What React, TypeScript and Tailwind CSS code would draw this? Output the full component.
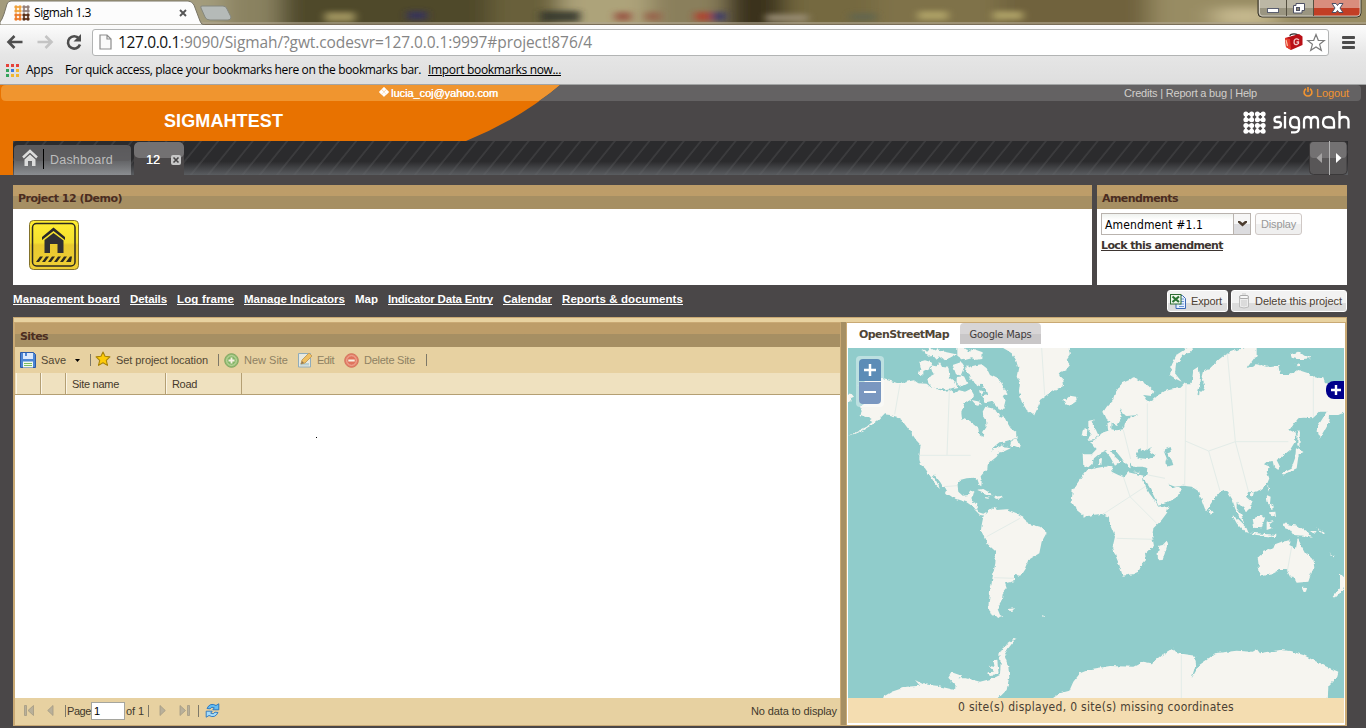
import { useLayoutEffect, useRef, useState, type ReactNode } from "react";

/** Single line of text whose letter spacing is computed so that it fills `w` pixels. */
function T({ w, className = "", children }: { w: number; className?: string; children: string }) {
  const ref = useRef<HTMLSpanElement>(null);
  const [ls, setLs] = useState(0);
  useLayoutEffect(() => {
    const el = ref.current;
    if (el) setLs((w - el.getBoundingClientRect().width) / children.length);
  }, [w, children]);
  return (
    <span ref={ref} className={`inline-block shrink-0 whitespace-nowrap ${className}`} style={{ letterSpacing: ls }}>
      {children}
    </span>
  );
}

const DOTS = [0, 1, 2, 3];

function DotGrid({ size, r, colors }: { size: number; r: number; colors: string[] }) {
  const s = size / 4;
  return (
    <svg width={size} height={size} viewBox={`0 0 ${size} ${size}`} className="shrink-0">
      {DOTS.map((y) =>
        DOTS.map((x) => (
          <circle key={`${x}-${y}`} cx={s * (x + 0.5)} cy={s * (y + 0.5)} r={r} fill={colors[(y > 1 ? 2 : 0) + (x > 1 ? 1 : 0)]} />
        )),
      )}
      {[0, 2].map((y) =>
        [0, 2].map((x) => (
          <path
            key={`b${x}-${y}`}
            d={`M${s * (x + 0.5)} ${s * (y + 0.5)}h${s}v${s}h${-s}z`}
            fill="none"
            stroke={colors[(y > 1 ? 2 : 0) + (x > 1 ? 1 : 0)]}
            strokeWidth={r * 0.8}
          />
        )),
      )}
    </svg>
  );
}

function TitleBar() {
  return (
    <div className="relative flex h-[25px] items-start overflow-hidden bg-[#7d7048]">
      <svg className="absolute inset-0" width="1366" height="25">
        <defs>
          <filter id="soft" x="-20%" y="-50%" width="140%" height="200%">
            <feGaussianBlur stdDeviation="12 4" />
          </filter>
          <filter id="soft2" x="-50%" y="-50%" width="200%" height="200%">
            <feGaussianBlur stdDeviation="4 2.500" />
          </filter>
        </defs>
        <g filter="url(#soft)">
          <rect x="-40" y="-10" width="280" height="45" fill="#a39b7c" />
          <rect x="225" y="-10" width="75" height="45" fill="#8a8260" />
          <rect x="280" y="-10" width="280" height="45" fill="#504a2b" />
          <rect x="490" y="-10" width="70" height="45" fill="#69603a" />
          <rect x="560" y="-10" width="90" height="45" fill="#ada37a" />
          <rect x="650" y="-10" width="80" height="45" fill="#8a7f5c" />
          <rect x="725" y="-10" width="60" height="45" fill="#3a331f" />
          <rect x="785" y="-10" width="90" height="45" fill="#75693f" />
          <rect x="875" y="-10" width="130" height="45" fill="#7f7249" />
          <rect x="1000" y="-10" width="150" height="45" fill="#6f623c" />
          <rect x="1150" y="-10" width="260" height="45" fill="#988c64" />
          <rect x="1215" y="8" width="60" height="17" fill="#c4b78d" />
        </g>
        <g filter="url(#soft2)" opacity=".85">
          <rect x="325" y="12" width="30" height="10" fill="#a99c65" />
          <rect x="407" y="11" width="20" height="9" fill="#34315e" />
          <rect x="540" y="11" width="40" height="11" fill="#33352b" />
          <rect x="615" y="12" width="16" height="9" fill="#96503f" />
          <rect x="645" y="12" width="16" height="9" fill="#97604a" />
          <rect x="695" y="12" width="16" height="9" fill="#b33d2b" />
          <rect x="712" y="12" width="14" height="9" fill="#39376c" />
          <rect x="766" y="14" width="42" height="8" fill="#9b8f77" />
          <rect x="850" y="13" width="26" height="8" fill="#626650" />
          <rect x="918" y="11" width="30" height="9" fill="#b4a76b" />
          <rect x="993" y="11" width="30" height="9" fill="#b4a76b" />
        </g>
        <rect y="22" width="1366" height="2" fill="#b0a791" opacity=".6" />
        <rect y="24" width="1366" height="1" fill="#7a6e58" />
        <path d="M202 6H223Q226 6 227 9L231 17Q231 20 228 20H210Q206 20 205 17L201 8Q200 6 202 6Z" fill="#b5bab8" stroke="#85877e" />
        <path d="M0 25V22Q2 20 4 14L7 4Q8 1 11 1H188Q192 1 194 5L200 21Q201 25 205 25Z" fill="#fcfcfc" stroke="#787465" />
        <path d="M1258 -2V13Q1258 17 1262 17H1357Q1361 17 1361 13V-2Z" fill="#9a9581" stroke="#363229" />
        <path d="M1314 0H1360V13Q1360 16 1357 16H1314Z" fill="#c23e25" />
        <path d="M1314 0H1360V8H1314Z" fill="#d98d7d" />
        <path d="M1259 0H1313V8H1259Z" fill="#bcb7a5" />
        <path d="M1259.500 0V13Q1260 16 1262 16H1357Q1360 16 1360 13V0" fill="none" stroke="#ded9cf" strokeOpacity=".8" />
        <path d="M1286.500 0V16M1313.500 0V16" stroke="#555041" />
        <rect x="1267.500" y="8.500" width="11" height="4" fill="#fff" stroke="#5b5f70" />
        <path d="M1296 3.500H1304.500V10.500H1302V13H1293.500V5.500H1296Z" fill="#fff" stroke="#4f5265" />
        <rect x="1296.500" y="7.500" width="3" height="3" fill="#898673" stroke="#4f5265" />
        <path d="M1332 3.500H1336L1337.500 5.500L1339 3.500H1343L1340 8L1343 12.500H1339L1337.500 10.500L1336 12.500H1332L1335 8Z" fill="#fff" stroke="#4b4f66" />
      </svg>
      <div className="relative flex items-center pl-[14px] pt-[5px]">
        <DotGrid size={16} r={1.7} colors={["#f0a23c", "#94807a", "#ec7a28", "#5b3018"]} />
        <T w={57} className="ml-1 font-['Open_Sans'] text-[12px] leading-4 text-black">
          Sigmah 1.3
        </T>
        <svg className="ml-[88px]" width="8" height="8" viewBox="0 0 8 8">
          <path d="M1 1L7 7M7 1L1 7" stroke="#555" strokeWidth="1.900" />
        </svg>
      </div>
    </div>
  );
}

const APP_COLORS = ["#e6423a", "#e6423a", "#e6423a", "#35a35c", "#3a7be0", "#f0b72f", "#35a35c", "#f0b72f", "#f0b72f"];

function BrowserBars() {
  return (
    <div className="h-[60px] border-b border-[#a3a5a5] bg-linear-to-b from-[#fcfcfc] via-[#e6e6e6] to-[#dedede]">
      <div className="flex h-[33px] items-center pt-[1px] pl-[6px]">
        <svg width="18" height="18" viewBox="0 0 18 18">
          <path d="M8.500 3L2.500 9L8.500 15M3 9H16.500" fill="none" stroke="#4e4e4e" strokeWidth="2.600" />
        </svg>
        <svg className="ml-3" width="18" height="18" viewBox="0 0 18 18">
          <path d="M9.500 3L15.500 9L9.500 15M15 9H1.500" fill="none" stroke="#c4c4c4" strokeWidth="2.600" />
        </svg>
        <svg className="ml-[11px]" width="18" height="18" viewBox="0 0 18 18">
          <path d="M14 5.500A6.200 6.200 0 1 0 15 11.500" fill="none" stroke="#4e4e4e" strokeWidth="2.600" />
          <path d="M16 1V8.500H8.500Z" fill="#4e4e4e" />
        </svg>
        <div className="ml-[9px] flex h-[27px] w-[1237px] items-center rounded-[3px] border border-[#b2b4b4] bg-white pl-[6px]">
          <svg width="13" height="16" viewBox="0 0 13 16">
            <path d="M1 1H8L12 5V15H1Z M8 1V5H12" fill="#fafafa" stroke="#8d8d8d" strokeWidth="1.200" />
          </svg>
          <T w={62} className="ml-[6px] font-['Open_Sans'] text-[15.500px] leading-5 text-[#111]">
            127.0.0.1
          </T>
          <T w={412} className="font-['Open_Sans'] text-[15.500px] leading-5 text-[#858585]">
            :9090/Sigmah/?gwt.codesvr=127.0.0.1:9997#project!876/4
          </T>
          <svg className="ml-auto" width="20" height="18" viewBox="0 0 20 18">
            <path d="M6 3Q6 .8 10 .8Q14 .8 14 3" fill="none" stroke="#333" strokeWidth="1.300" />
            <path d="M1 5L15 1L18.500 3.500V12L7 17L2 14Z" fill="#b90f16" />
            <path d="M1 5L6 6L7 17L2 14Z" fill="#e43c2d" />
            <path d="M2 7L3.500 13" stroke="#ffc4a8" strokeWidth="1.200" />
            <path d="M15 7Q12 4.500 10.300 7.300Q9.300 12.500 13 11.500L14.500 10.500V9H12.500" fill="none" stroke="#f3c9c9" strokeWidth="1.300" />
          </svg>
          <svg className="mr-[2px] ml-[2px]" width="20" height="19" viewBox="0 0 20 19">
            <path d="M10 1.500L12.300 7.300L18.300 7.500L13.600 11.300L15.300 17.300L10 13.900L4.700 17.300L6.400 11.300L1.700 7.500L7.700 7.300Z" fill="#fff" stroke="#7c7c7c" strokeWidth="1.200" />
          </svg>
        </div>
        <svg className="ml-[13px]" width="13" height="13" viewBox="0 0 13 13">
          <path d="M1 1.500H12M1 6.500H12M1 11.500H12" stroke="#4b4b4b" strokeWidth="2.800" strokeLinecap="round" />
        </svg>
      </div>
      <div className="flex h-[24px] items-center pl-[6px] font-['Open_Sans'] text-[12px] leading-4 text-black">
        <div className="grid grid-cols-3 gap-[2px]">
          {APP_COLORS.map((c, i) => (
            <span key={i} className="size-[3px]" style={{ background: c }} />
          ))}
        </div>
        <T w={27} className="ml-[7px]">Apps</T>
        <T w={356} className="ml-[12px]">For quick access, place your bookmarks here on the bookmarks bar.</T>
        <T w={133} className="ml-[7px] underline">Import bookmarks now...</T>
      </div>
    </div>
  );
}

function AppHeader() {
  return (
    <div className="relative h-[90px] bg-[#4a4748] font-['Liberation_Sans']">
      <svg className="absolute inset-0" width="1366" height="90">
        <path d="M0 0H560Q520 34 466 56H13V90H0Z" fill="#e87200" />
        <path d="M6 0H560Q551 8 539 16H6Q1 16 1 11V5Q1 0 6 0Z" fill="#f0952f" />
        <path d="M560 0H1357Q1361 0 1361 4V12Q1361 16 1357 16H539Q551 8 560 0Z" fill="#646263" />
      </svg>
      <div className="relative flex h-4 items-center pl-[379px] text-[11px] leading-4 text-[#d2cfcb]">
        <svg width="10" height="10" viewBox="0 0 10 10" className="-mt-[2px]">
          <path d="M5 0L7.300 2.300L5 4.600L2.700 2.300ZM2.400 2.500L4.800 5L2.400 7.500L0 5ZM7.600 2.500L10 5L7.600 7.500L5.200 5ZM5 5.200L7.300 7.500L5 9.800L2.700 7.500Z" fill="#fff" stroke="#fff" strokeWidth=".3" />
        </svg>
        <T w={107} className="ml-[2px] text-white [text-shadow:0.3px_0_0_#fff]">lucia_coj@yahoo.com</T>
        <T w={133} className="ml-[626px]">Credits | Report a bug | Help</T>
        <svg className="ml-[46px] -mt-[2px]" width="10" height="10" viewBox="0 0 10 10">
          <path d="M3 1.800A3.900 3.900 0 1 0 7 1.800M5 0V5" fill="none" stroke="#f29430" strokeWidth="1.600" />
        </svg>
        <T w={33} className="ml-[3px] text-[#f29430]">Logout</T>
      </div>
      <div className="relative flex h-10 items-center pl-[164px]">
        <T w={119} className="text-[18px] leading-5 font-bold text-white">SIGMAHTEST</T>
        <div className="mt-[10px] ml-[960px] flex items-start self-start">
          <DotGrid size={23} r={2.5} colors={["#fff", "#fff", "#fff", "#fff"]} />
          <svg className="ml-[7px]" width="78" height="24" viewBox="0 0 78 24" fill="none" stroke="#fff" strokeWidth="2.300">
            <path d="M7.500 6H4Q1.500 6 1.500 8.300Q1.500 11 4 11H5.500Q8 11 8 13.600Q8 16.500 5 16.500H.5" />
            <path d="M12 5V17.500M12 1V3.200" />
            <path d="M26 16.500H21.500Q17 16.500 17 11.300Q17 6 21.500 6Q26 6 26 11V17Q26 21.300 22 21.300H18" />
            <path d="M31 17.500V10Q31 6 34.500 6Q38 6 38 10V17.500M38 10Q38 6 41.500 6Q45 6 45 10V17.500" />
            <path d="M61 17.500V11Q61 6 55.500 6Q50 6 50 11.300Q50 16.500 55 16.500H61" />
            <path d="M66.500 0V17.500M66.500 10Q66.500 6 71 6Q75.500 6 75.500 10.500V17.500" />
          </svg>
        </div>
      </div>
      <div className="relative ml-[13px] flex h-[34px] w-[1335px] items-end rounded-tl-[4px] bg-[#2b2b2d] bg-[linear-gradient(to_bottom,transparent_60%,rgba(102,105,109,0.8)_100%),repeating-linear-gradient(129deg,transparent_0px,transparent_10.7px,#3b3b3d_11.7px,#3b3b3d_12.7px,transparent_13.4px)]">
        <div className="relative mr-[3px] ml-[1px] flex h-[30px] w-[117px] items-center overflow-hidden rounded-t-[4px] bg-linear-to-b from-[#3b3b3d] to-[#8b8d90] pl-2">
          <div className="absolute inset-x-0 top-0 h-4 rounded-[4px] bg-[#5e5d5f]/90" />
          <svg className="relative -mt-1" width="16" height="18" viewBox="0 0 16 18">
            <path d="M1 8.500L8 2L15 8.500" fill="none" stroke="#dcdcdc" strokeWidth="2.400" />
            <path d="M2.500 10.500L8 5.500L13.500 10.500V17H10V12H6V17H2.500Z" fill="#dcdcdc" />
          </svg>
          <span className="relative -mt-[2px] ml-[5px] h-5 w-px bg-black" />
          <T w={63} className="relative ml-[6px] text-[12.500px] leading-4 text-[#bdbdbd]">Dashboard</T>
        </div>
        <div className="relative flex h-[33px] w-[50px] items-center overflow-hidden rounded-t-[5px] bg-[#4a4748] pt-[2px] pl-3">
          <div className="absolute inset-x-0 top-0 h-4 rounded-[5px] bg-[#737172]" />
          <span className="relative text-[12.500px] leading-4 text-white [text-shadow:0.3px_0_0_#fff]">12</span>
          <svg className="relative ml-[11px]" width="10" height="10" viewBox="0 0 10 10">
            <rect width="10" height="10" rx="2" fill="#c7c7c7" />
            <path d="M2.500 2.500L7.500 7.500M7.500 2.500L2.500 7.500" stroke="#474546" strokeWidth="1.600" />
          </svg>
        </div>
        <svg className="ml-auto" width="40" height="34" viewBox="0 0 40 34">
          <rect x="1.500" y=".5" width="37.500" height="33" rx="4" fill="#585657" stroke="#3b393a" />
          <path d="M5.500 1H20V17H5.500Q2 17 2 13V5Q2 1 5.500 1ZM20 1H35Q38.500 1 38.500 5V13Q38.500 17 35 17H20Z" fill="#737172" />
          <path d="M21.500 0V34" stroke="#b5b5b5" />
          <path d="M14 12V22L8.500 17Z" fill="#a4a2a2" />
          <path d="M28 12V22L33.500 17Z" fill="#fff" />
        </svg>
      </div>
    </div>
  );
}

function PanelTitle({ w, children, className = "" }: { w: number; children: string; className?: string }) {
  return (
    <div className={`flex h-6 items-center bg-linear-to-b from-[#bd9d69] from-46% to-[#a68f63] to-46% pl-[5px] pt-[3px] ${className}`}>
      <T w={w} className="font-['DejaVu_Sans'] text-[11px] leading-4 font-bold text-[#4b2c20]">
        {children}
      </T>
    </div>
  );
}

function ProjectPanels() {
  return (
    <div className="mx-[13px] mt-[10px] flex h-[100px] w-[1334px] gap-[5px]">
      <section className="w-[1079px] bg-white">
        <PanelTitle w={104}>Project 12 (Demo)</PanelTitle>
        <svg className="mt-[10px] ml-[15px]" width="52" height="52" viewBox="0 0 52 52">
          <defs>
            <linearGradient id="sign" x2="0" y2="1">
              <stop offset="0" stopColor="#ffee32" />
              <stop offset=".45" stopColor="#f5df30" />
              <stop offset=".5" stopColor="#e9c92f" />
              <stop offset="1" stopColor="#efcf35" />
            </linearGradient>
          </defs>
          <rect x="1.500" y="1.500" width="49" height="49" rx="4" fill="url(#sign)" stroke="#83722b" />
          <rect x="4.500" y="4.500" width="42.500" height="42.500" rx="4" fill="none" stroke="#2c2a20" strokeWidth="1.500" />
          <path d="M14 18L25.500 8.500L37 18V21L25.500 12L14 21Z" fill="#29282a" />
          <path d="M16.500 21L25.500 14L35.500 21.500V34H29.500V25H22V34H16.500Z" fill="#303033" />
          <path d="M8 43L12 37.500H15L11 43ZM14 43L18 37.500H21L17 43ZM20 43L24 37.500H27L23 43ZM26 43L30 37.500H33L29 43ZM32 43L36 37.500H39L35 43ZM38 43L42 37.500H44L43 43Z" fill="#2c2a20" />
        </svg>
      </section>
      <section className="w-[250px] bg-white">
        <PanelTitle w={76}>Amendments</PanelTitle>
        <div className="mt-1 ml-1 flex h-[22px] gap-1">
          <div className="flex w-[150px] border border-[#b9b3ae] bg-linear-to-b from-[#eff2ef] to-white to-30%">
            <div className="flex flex-1 items-center pl-[3px]">
              <T w={98} className="mt-[2px] font-['DejaVu_Sans_Condensed','DejaVu_Sans'] text-[12px] leading-4 text-black">Amendment #1.1</T>
            </div>
            <div className="flex w-[17px] items-center justify-center border-l border-[#b9b3ae] bg-linear-to-b from-[#f6f6f6] from-50% to-[#dcdcdf] to-50%">
              <svg width="9" height="6" viewBox="0 0 9 6">
                <path d="M0 0H2L4.500 2L7 0H9V1.500L4.500 5.500L0 1.500Z" fill="#4b3b2e" />
              </svg>
            </div>
          </div>
          <div className="flex w-[47px] items-center justify-center rounded-[3px] border border-[#cfc8c5] bg-linear-to-b from-[#fbfbfb] from-50% to-[#efefef] to-50%">
            <T w={35} className="font-['Liberation_Sans'] text-[11px] leading-4 text-[#989898]">Display</T>
          </div>
        </div>
        <div className="mt-px ml-1 flex h-[19px] items-center">
          <T w={122} className="font-['DejaVu_Sans'] text-[11px] leading-4 font-bold text-[#3d3531] underline underline-offset-1">
            Lock this amendment
          </T>
        </div>
      </section>
    </div>
  );
}

const LINKS: [string, number][] = [
  ["Management board", 107],
  ["Details", 37],
  ["Log frame", 57],
  ["Manage Indicators", 101],
  ["Map", 23],
  ["Indicator Data Entry", 105],
  ["Calendar", 49],
  ["Reports & documents", 121],
];

function ActionButton({ w, textWidth, label, icon }: { w: string; textWidth: number; label: string; icon: ReactNode }) {
  return (
    <div className={`flex h-[22px] items-center rounded-[3px] border border-white bg-linear-to-b from-[#f2f2f2] from-60% to-[#dcdcdc] to-60% ${w}`}>
      {icon}
      <T w={textWidth} className="ml-[5px] text-[11px] leading-4 text-[#4d4132]">{label}</T>
    </div>
  );
}

function LinkRow() {
  return (
    <div className="mr-[19px] ml-[13px] flex h-[32px] items-start pt-[5px] font-['Liberation_Sans']">
      <div className="mt-[1px] flex gap-[10px] text-[11.500px] leading-4 font-bold text-white">
        {LINKS.map(([label, w]) => (
          <T key={label} w={w} className={label === "Map" ? "" : "h-[14px] border-b border-white"}>{label}</T>
        ))}
      </div>
      <div className="ml-auto flex gap-[3px]">
        <ActionButton
          w="w-[61px] pl-[2px]"
          textWidth={31}
          label="Export"
          icon={
            <svg width="16" height="16" viewBox="0 0 16 16" className="shrink-0">
              <path d="M6 2.500H12.500L15.500 5.500V15.500H6Z" fill="#e6f0ff" stroke="#3d69b5" />
              <path d="M11 6H14M11 8.500H14M9 11H14M9 13.500H14" stroke="#6c96d8" />
              <rect x=".5" y="1.500" width="10.500" height="9.500" fill="#eff7eb" stroke="#2f6d33" />
              <path d="M2.500 3.500L9 9M9 3.500L2.500 9" stroke="#2b7433" strokeWidth="2.200" />
            </svg>
          }
        />
        <ActionButton
          w="w-[116px] pl-[5px]"
          textWidth={87}
          label="Delete this project"
          icon={
            <svg width="14" height="16" viewBox="0 0 14 16" className="mr-[-1px] shrink-0">
              <path d="M2.500 4.500V14Q7 16 11.500 14V4.500" fill="#ededed" stroke="#bcbcbc" />
              <rect x="2.500" y="2.500" width="9" height="3" rx="1.500" fill="#f7f7f7" stroke="#aaa" />
              <path d="M5 1H9M5 7V13M7 7V13.500M9 7V13" stroke="#c9c9c9" />
            </svg>
          }
        />
      </div>
    </div>
  );
}

function Sep({ className = "" }: { className?: string }) {
  return <span className={`h-3 w-px shrink-0 bg-[#7d7868] ${className}`} />;
}

function SitesToolbar() {
  return (
    <div className="flex h-[26px] items-center bg-[#e7d1a1] pl-[5px] text-[11px] leading-4 text-[#514733]">
      <svg width="16" height="16" viewBox="0 0 16 16">
        <path d="M.5 .5H13.500L15.500 2.500V15.500H.5Z" fill="#4d86d4" stroke="#2d5ba7" />
        <path d="M3 1H13V7H3Z" fill="#dce9fb" />
        <path d="M5 1H7V4H5Z" fill="#4d86d4" />
        <path d="M3 9.500H13V15.500H3Z" fill="#f3faef" />
        <path d="M4 11.500H12M4 13.500H12" stroke="#79bd61" />
      </svg>
      <T w={25} className="ml-[5px]">Save</T>
      <svg className="ml-[9px]" width="5" height="3" viewBox="0 0 5 3"><path d="M0 0H5L2.500 3Z" fill="#000" /></svg>
      <Sep className="ml-[10px]" />
      <svg className="-mt-[2px] ml-[4px]" width="16" height="16" viewBox="0 0 15 15">
        <path d="M7.500 1L9.400 5L14 5.500L10.600 8.700L11.700 13.500L7.500 11L3.300 13.500L4.400 8.700L1 5.500L5.600 5Z" fill="#fdcb09" stroke="#a88309" strokeLinejoin="round" />
      </svg>
      <T w={92} className="ml-[5px]">Set project location</T>
      <Sep className="ml-[10px]" />
      <svg className="ml-[5px] opacity-70" width="15" height="15" viewBox="0 0 15 15">
        <circle cx="7.500" cy="7.500" r="6.800" fill="#70b85e" stroke="#57924a" />
        <circle cx="7.500" cy="7.500" r="4.800" fill="#5eac52" stroke="#b9dfab" />
        <path d="M7.500 4.500V10.500M4.500 7.500H10.500" stroke="#fff" strokeWidth="1.800" />
      </svg>
      <T w={44} className="ml-[5px] text-[#8e8163]">New Site</T>
      <svg className="ml-[9px] opacity-70" width="16" height="16" viewBox="0 0 16 16">
        <path d="M1.500 1.500H13.500V15H1.500Z" fill="#e9f4fb" stroke="#6a9dc7" />
        <path d="M3 11H12V13.500H3Z" fill="#a5cfe8" />
        <path d="M4 12L5 8L12 1L15 4L8 11Z" fill="#f4ba48" stroke="#b58a42" />
        <path d="M4 12L5 9L7 11Z" fill="#634f39" />
      </svg>
      <T w={17} className="ml-[4px] text-[#8e8163]">Edit</T>
      <svg className="ml-[10px] opacity-70" width="15" height="15" viewBox="0 0 15 15">
        <circle cx="7.500" cy="7.500" r="6.800" fill="#e65b4f" stroke="#c94b40" />
        <circle cx="7.500" cy="7.500" r="4.800" fill="#de4c41" stroke="#f3a49c" />
        <path d="M4.300 7.500H10.700" stroke="#fff" strokeWidth="2" />
      </svg>
      <T w={51} className="ml-[5px] text-[#8e8163]">Delete Site</T>
      <Sep className="ml-[11px]" />
    </div>
  );
}

function GridHeader() {
  return (
    <div className="flex h-[22px] items-center border-b border-[#b49f73] bg-[#efe1bf] pl-[1px] text-[11px] leading-4 text-[#45392b]">
      <div className="h-full w-[25px] border-r border-l border-r-[#b49f73] border-l-[#fbf5e5]" />
      <div className="h-full w-[25px] border-r border-l border-r-[#b49f73] border-l-[#fbf5e5]" />
      <div className="flex h-full w-[100px] items-center border-r border-l border-r-[#b49f73] border-l-[#fbf5e5] pl-[5px]">
        <T w={47}>Site name</T>
      </div>
      <div className="flex h-full w-[76px] items-center border-r border-l border-r-[#b49f73] border-l-[#fbf5e5] pl-[5px]">
        <T w={25}>Road</T>
      </div>
    </div>
  );
}

function PagingBar() {
  return (
    <div className="flex h-[27px] items-center bg-[#e7d1a1] pb-[2px] pl-[9px] text-[11px] leading-4 text-[#42392c]">
      <svg width="11" height="11" viewBox="0 0 11 11">
        <path d="M.5 .5H2.500V10.500H.5ZM9.500 .5V10.500L4 5.500Z" fill="#b9b09a" stroke="#a39a83" strokeWidth=".8" />
      </svg>
      <svg className="ml-3" width="7" height="11" viewBox="0 0 7 11">
        <path d="M6 .5V10.500L.7 5.500Z" fill="#b9b09a" stroke="#a39a83" strokeWidth=".8" />
      </svg>
      <Sep className="ml-[11px]" />
      <T w={24} className="ml-px">Page</T>
      <div className="flex h-[18px] w-[34px] items-center border border-[#a5a59e] bg-white pl-[2px] text-black">1</div>
      <T w={18} className="ml-px">of 1</T>
      <Sep className="ml-[4px]" />
      <svg className="ml-[10px]" width="7" height="11" viewBox="0 0 7 11">
        <path d="M1 .5V10.500L6.300 5.500Z" fill="#b9b09a" stroke="#a39a83" strokeWidth=".8" />
      </svg>
      <svg className="ml-[13px]" width="11" height="11" viewBox="0 0 11 11">
        <path d="M8.500 .5H10.500V10.500H8.500ZM1 .5V10.500L6.500 5.500Z" fill="#b9b09a" stroke="#a39a83" strokeWidth=".8" />
      </svg>
      <Sep className="ml-[8px]" />
      <svg className="ml-[6px]" width="15" height="15" viewBox="0 0 15 15">
        <path d="M2 5.500Q5 -.8 11 2.500L13.800 .8V6.800H7.800L9.300 4.800Q6.500 3.200 5 5.800Z" fill="#65bdf2" stroke="#2672bd" strokeWidth=".9" />
        <path d="M13 9.500Q10 15.800 4 12.500L1.200 14.200V8.200H7.200L5.700 10.200Q8.500 11.800 10 9.200Z" fill="#a5dcfa" stroke="#2672bd" strokeWidth=".9" />
      </svg>
      <T w={86} className="mr-[3px] ml-auto">No data to display</T>
    </div>
  );
}

function WorldMap() {
  return (
    <svg width="496" height="350" viewBox="24 99 1488 1050" className="block">
      <defs>
        <filter id="coast" x="0" y="0" width="100%" height="100%" colorInterpolationFilters="sRGB">
          <feTurbulence type="fractalNoise" baseFrequency="0.07" numOctaves="2" seed="7" result="n" />
          <feDisplacementMap in="SourceGraphic" in2="n" scale="11" xChannelSelector="R" yChannelSelector="G" />
          <feGaussianBlur stdDeviation="0.8" />
        </filter>
      </defs>
      <rect x="24" y="99" width="1488" height="1050" fill="#90cccb" />
      <g filter="url(#coast)" fill="#f6f5f0">
        <rect x="-20" y="50" width="1580" height="1150" fill="#90cccb" />
        {/* North and Central America */}
        <path d="M62 225L56 210 75 202 70 193 95 185 127 192 150 197 180 207 200 200 222 196 235 205 260 206 275 218 310 228 330 226 342 235 355 225 375 230 392 222 402 240 395 252 380 262 372 270 364 290 366 310 385 318 400 328 415 340 418 360 428 366 430 350 440 335 438 318 430 305 428 290 436 275 455 280 470 290 480 308 490 300 500 320 512 340 528 352 530 368 510 375 490 380 478 382 462 395 450 408 470 396 490 388 492 397 512 400 490 410 478 413 470 425 455 437 443 450 442 462 432 472 422 484 425 500 424 514 418 510 412 492 400 488 380 490 360 495 352 510 355 530 368 542 385 540 390 530 403 528 398 545 392 555 400 560 412 565 410 580 416 592 430 596 440 590 436 602 420 600 405 585 395 572 380 562 360 555 340 548 320 535 312 520 300 500 285 482 279 483 290 500 300 522 290 514 275 490 265 475 255 460 243 450 238 430 240 405 242 390 228 375 215 355 200 335 185 315 170 305 150 300 132 298 115 315 95 330 70 345 40 358 24 362 50 350 80 335 100 318 90 312 75 305 62 300 65 285 60 275 80 262 60 250Z" />
        <path d="M18 235L35 237 42 245 32 250 35 258 18 262ZM515 375L530 370 532 382 542 388 540 398 525 392 510 394ZM238 140L255 136 275 142 268 160 250 168 250 182 236 178 242 160ZM245 102L262 110 270 98 280 108 296 98 300 108 320 112 348 118 330 128 312 136 296 124 290 134 278 120 262 122ZM270 150L288 154 300 142 308 156 325 158 330 190 345 200 352 216 322 222 300 218 280 222 265 205 262 190 280 180ZM338 150L362 142 374 160 365 182 348 178ZM350 186L372 184 382 205 362 215 350 206ZM380 150L390 158 388 180 378 172ZM352 96L378 98 386 110 400 102 428 112 427 132 410 134 395 130 372 136 352 122ZM390 155L410 150 425 148 440 160 450 180 480 195 490 215 503 235 488 245 496 262 490 285 472 278 455 258 438 262 425 245 442 240 436 222 425 206 412 214 404 200 392 195 385 175ZM395 255L420 260 425 270 410 272ZM420 225L432 230 424 240Z" />
        {/* Greenland, Iceland, Caribbean */}
        <path d="M473 90L500 105 515 115 528 135 535 160 530 185 540 205 537 230 545 260 560 285 582 302 590 285 600 255 620 240 645 225 672 212 670 195 660 185 655 175 678 165 690 150 680 135 690 120 685 90ZM668 250L678 253 690 242 708 245 710 258 690 272 675 265ZM410 524L430 522 462 541 445 540 425 530ZM462 546L485 542 490 550 468 552ZM435 546L450 548 448 552 436 550Z" />
        {/* South America */}
        <path d="M425 630L430 605 445 590 465 575 470 585 500 583 530 595 550 605 560 625 600 635 620 653 605 680 598 715 565 735 555 760 540 783 525 780 525 798 495 805 500 820 488 835 485 855 472 880 480 900 490 905 475 910 455 900 445 875 450 830 458 785 466 745 468 710 440 685 423 645ZM507 882L522 880 518 887 508 888ZM606 900L614 904 608 906Z" />
        <g transform="translate(750 0)">
          {/* Europe and Asia */}
          <path d="M-22 418L5 418 20 402 5 385 0 383 20 370 35 355 55 348 52 325 65 318 64 343 80 346 100 343 105 325 120 308 145 300 110 303 93 295 95 275 110 255 122 250 100 270 88 290 95 305 80 333 68 325 50 312 40 290 50 275 68 255 75 235 95 205 118 195 130 187 150 197 175 212 193 230 185 243 160 240 172 262 188 255 205 240 225 228 250 222 272 218 285 205 305 205 310 165 325 155 330 180 328 215 322 240 340 225 345 210 335 185 340 165 360 160 385 135 410 115 440 105 480 95 500 95 500 120 470 160 500 148 530 155 565 150 570 180 600 180 625 165 655 175 670 187 700 190 705 205 780 205 780 285 745 300 720 300 718 320 708 340 690 370 683 350 685 330 695 315 710 290 690 290 668 310 640 308 625 310 605 335 598 345 618 355 615 380 600 405 575 425 560 435 570 455 565 465 552 455 548 438 530 440 522 448 540 455 530 470 538 490 530 510 510 525 490 532 475 530 468 545 485 560 484 578 468 588 450 570 440 560 440 580 455 600 463 625 450 610 435 580 430 560 425 550 415 535 408 527 390 532 370 555 360 570 352 590 345 582 335 555 328 530 305 515 280 512 255 515 235 508 225 490 240 515 250 522 268 515 272 525 262 545 235 562 205 572 195 550 180 520 165 495 158 490 170 478 172 458 155 455 130 455 118 440 122 460 112 456 108 448 95 430 75 405 60 405 75 425 92 440 75 452 60 425 45 408 30 415 12 430 8 445 -5 457 -20 452Z" />
          <path d="M110 258L130 248 140 270 136 296 115 298 110 286 125 268Z" />
          <path d="M138 425L150 400 165 408 185 396 180 410 197 422 175 432 150 430ZM220 405L242 396 246 410 232 415 245 435 250 450 235 454 226 445 230 430Z" fill="#90cccb" />
          {/* British Isles, Novaya Zemlya, Arctic and Kamchatka islands */}
          <path d="M-5 318L10 315 8 328 18 345 25 360 15 372 -8 375 5 360 -5 345ZM-22 345L-8 342 -10 362 -25 365ZM240 180L245 150 262 118 290 100 312 95 300 110 275 125 258 150 255 175 275 200 258 192ZM602 118L625 110 640 122 655 124 662 130 640 132 620 132 605 128ZM616 146L632 152 620 154ZM623 345L630 350 628 400 622 390ZM618 400L640 410 625 425 620 460 595 472 575 482 580 470 605 458 615 430ZM532 512L538 520 534 530ZM480 535L492 532 488 545ZM530 540L542 545 540 565 555 575 545 582 532 562ZM358 582L368 592 362 600ZM540 592L556 590 558 605 544 604ZM27 430L36 430 34 450 28 450ZM48 452L68 454 64 462ZM128 470L150 470 145 475Z" />
          {/* Africa and Madagascar */}
          <path d="M-8 465L0 463 40 455 62 455 65 470 85 480 102 487 115 472 140 478 158 482 162 505 178 535 200 565 205 578 236 573 230 595 215 615 190 640 187 665 192 693 165 715 168 735 155 750 145 770 128 778 98 782 88 750 78 725 68 695 75 665 58 625 57 605 35 597 5 600 -15 605 -40 585 -55 560 -52 525 -35 500 -20 480ZM230 677L234 685 218 735 204 736 203 718 208 692 218 690Z" />
          {/* Indonesia and New Guinea */}
          <path d="M425 598L445 615 470 640 476 655 462 650 440 625ZM485 612L515 600 525 608 515 640 490 638ZM470 652L525 657 560 660 555 666 500 660ZM530 620L552 615 538 625 545 640 530 645ZM580 625L605 630 625 632 650 650 665 668 640 662 610 660 600 645 585 640ZM655 648L680 648 675 655ZM678 635L705 655 700 658ZM718 712L734 722 730 724Z" />
          {/* Australia and New Zealand */}
          <path d="M503 725L520 710 550 700 555 688 575 680 602 676 598 690 618 700 623 670 636 695 645 712 670 735 673 755 662 780 655 800 620 803 610 785 600 785 590 765 570 765 545 778 515 784 508 770ZM636 815L651 816 648 830 640 830ZM750 775L765 790 768 800 758 825 735 850 728 845 750 820Z" />
          {/* Antarctica, eastern part */}
          <path d="M-110 1160L-110 1148 -90 1135 -62 1127 -50 1100 -30 1075 0 1063 60 1053 130 1055 160 1040 185 1045 215 1020 248 1000 262 1015 315 1022 318 1045 305 1090 328 1050 350 1035 375 1015 440 1007 485 1010 500 1002 510 1015 570 1005 600 1008 640 1020 680 1040 705 1053 745 1070 740 1090 715 1115 713 1160Z" />
        </g>
        {/* Antarctica, western part and peninsula */}
        <path d="M130 1160L130 1145 155 1130 200 1115 240 1112 225 1095 250 1108 290 1112 345 1125 350 1115 325 1088 335 1072 365 1082 355 1090 380 1090 420 1100 460 1090 480 1080 482 1045 478 1020 490 995 530 968 505 1000 493 1020 505 1055 508 1085 500 1125 465 1160ZM460 1036L472 1034 476 1078 450 1080 442 1072 462 1070 446 1052 464 1056Z" />
      </g>
      {/* Graticule of faint region boundaries */}
      <g fill="none" stroke="#e3ece8" strokeWidth="3">
        <path d="M180 207L164 298M328 228L321 420M238 421H392M605 99L614 240M312 515L352 512M440 665L540 610M462 788L522 790" />
        <path d="M922 265V405M1038 205L1036 378 1034 512M1036 378L1106 408 1186 380 1162 115M1186 380H1345M1106 408L1140 528M1186 380L1225 528M1420 187V305M850 345L872 432M850 485L870 545 950 625M870 545L915 515M870 545L790 597M925 480L975 490M830 670L940 673M1355 695L1342 768M1024 1020V1149" />
      </g>
    </svg>
  );
}

function MapPanel() {
  return (
    <section className="flex w-[499px] flex-col border-t border-l border-[#c9a974] bg-white px-px">
      <div className="flex h-[25px] items-start">
        <T w={90} className="mt-[4px] ml-[11px] font-['DejaVu_Sans'] text-[11px] leading-4 font-bold text-[#4f4535]">
          OpenStreetMap
        </T>
        <div className="ml-[11px] flex h-[21px] w-[81px] justify-center rounded-t-[4px] bg-linear-to-b from-[#d7d5d6] from-52% to-[#c9c7c8] to-52% pt-[4px]">
          <T w={62} className="font-['DejaVu_Sans_Condensed','DejaVu_Sans'] text-[11px] leading-4 text-[#3f3b3c]">Google Maps</T>
        </div>
      </div>
      <div className="relative h-[350px] w-[496px] overflow-hidden">
        <WorldMap />
        <div className="absolute top-2 left-2 h-[51px] w-7 rounded-[4px] bg-white/40 p-[3px]">
          <div className="flex h-[22px] w-[22px] items-center justify-center rounded-t-[4px] bg-[#5c8cb7]">
            <svg width="12" height="12"><path d="M6 0V12M0 6H12" stroke="#fff" strokeWidth="2.500" /></svg>
          </div>
          <div className="mt-px flex h-[22px] w-[22px] items-center justify-center rounded-b-[4px] bg-[#7a97c0]">
            <svg width="12" height="12"><path d="M0 5H12" stroke="#fff" strokeWidth="2" /></svg>
          </div>
        </div>
        <div className="absolute top-[33px] right-0 flex h-[18px] w-[18px] items-center justify-center rounded-l-[8px] bg-[#00008b]">
          <svg width="10" height="10" className="ml-[2px]"><path d="M5 0V10M0 5H10" stroke="#fff" strokeWidth="2.400" /></svg>
        </div>
      </div>
      <div className="mb-px flex h-[25px] w-[496px] items-start justify-center bg-[#f4ddb1]">
        <T w={276} className="mt-px font-['DejaVu_Sans_Condensed','DejaVu_Sans'] text-[12px] leading-[17px] text-[#4a3f33]">
          0 site(s) displayed, 0 site(s) missing coordinates
        </T>
      </div>
    </section>
  );
}

function Workspace() {
  return (
    <div className="ml-[13px] flex h-[409px] w-[1334px] flex-col border border-[#c9a974] bg-[#e8d2a0] pt-1">
      <div className="flex h-[403px]">
        <section className="flex w-[827px] flex-col border-t border-r border-l border-[#c9a974] bg-white font-['Liberation_Sans']">
          <PanelTitle w={28}>Sites</PanelTitle>
          <SitesToolbar />
          <GridHeader />
          <div className="flex-1 pt-[42px] pl-[301px]">
            <div className="size-px bg-black" />
          </div>
          <PagingBar />
        </section>
        <div className="w-[5px] bg-[#a68f63]" />
        <MapPanel />
        <div className="flex-1 bg-[#c9a974]" />
      </div>
    </div>
  );
}

export default function App() {
  return (
    <div className="h-[728px] w-[1366px] overflow-hidden bg-[#4a4748]">
      <TitleBar />
      <BrowserBars />
      <AppHeader />
      <ProjectPanels />
      <LinkRow />
      <Workspace />
    </div>
  );
}
